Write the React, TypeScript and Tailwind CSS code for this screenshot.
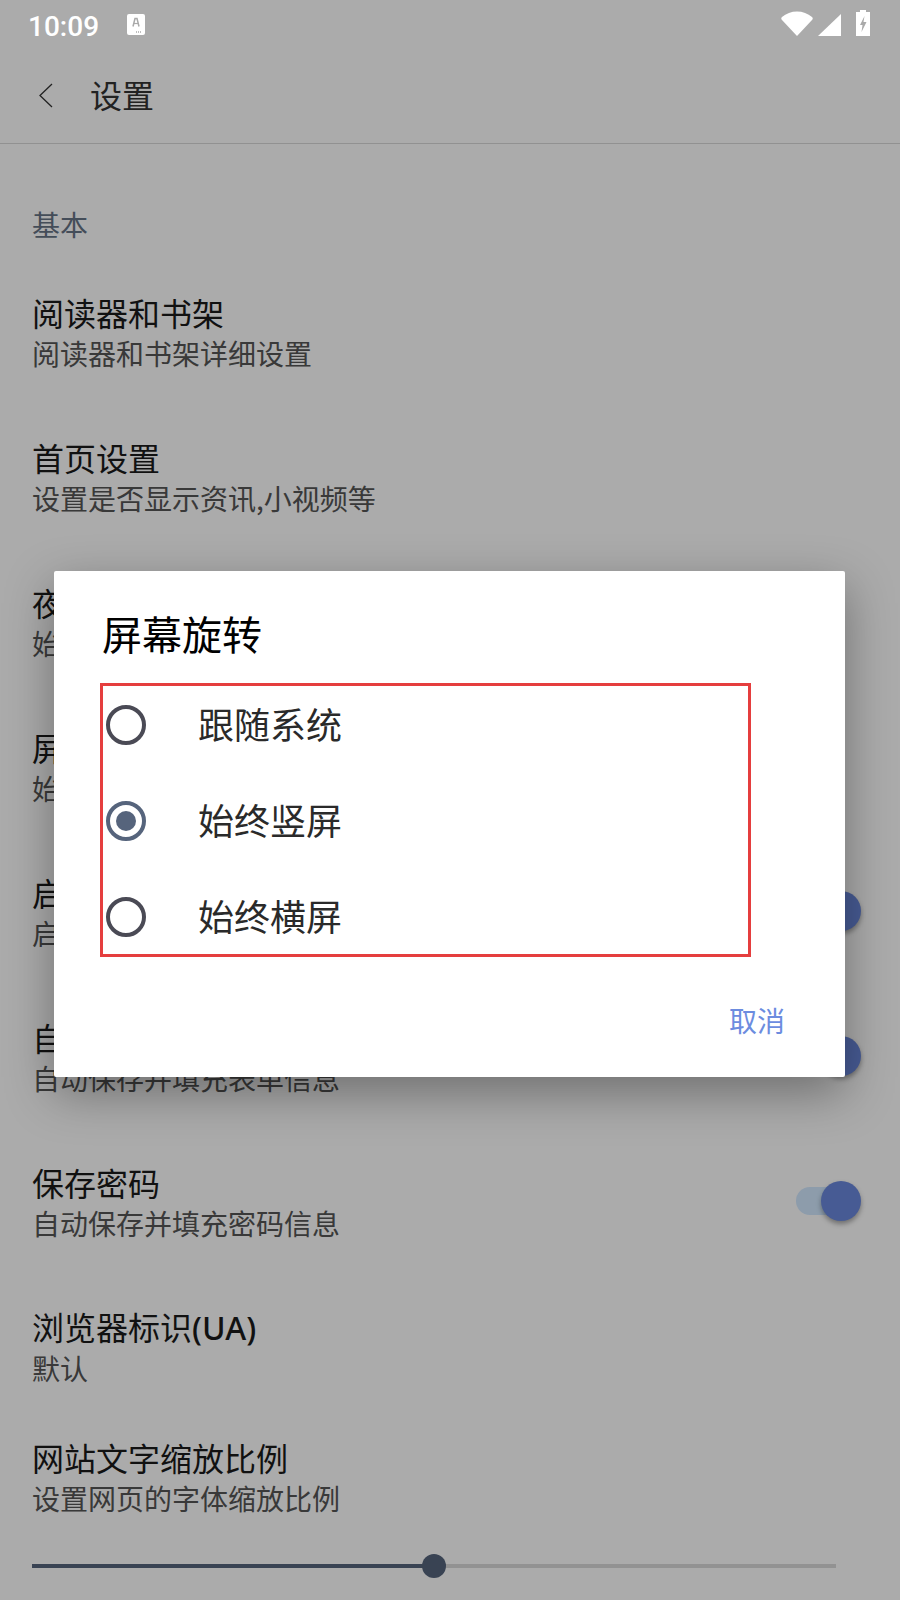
import type { ReactNode } from "react";

const cjk = "font-['Noto_Sans_CJK_SC','Noto_Sans_CJK_JP',sans-serif]";

function Toggle() {
  return (
    <div className="relative -mt-[3px] h-10 w-[65px] shrink-0">
      <div className="absolute left-0 top-[6px] h-7 w-[50px] rounded-full bg-[#d2e9ff]" />
      <div className="absolute right-0 top-0 h-10 w-10 rounded-full bg-[#6a88dd] shadow-[0_3px_5px_rgba(0,0,0,0.35)]" />
    </div>
  );
}

function Item({ title, sub, toggle, h = "h-[145px]" }: { title: ReactNode; sub: string; toggle?: boolean; h?: string }) {
  return (
    <div className={`flex items-center justify-between pl-8 pr-[39px] ${h}`}>
      <div className="flex flex-col">
        <div className="text-[32px] leading-[41px] text-[#1a1a1a]">{title}</div>
        <div className="text-[28px] leading-[41px] text-[#555]">{sub}</div>
      </div>
      {toggle && <Toggle />}
    </div>
  );
}

function Radio({ on }: { on?: boolean }) {
  return on ? (
    <div className="flex h-10 w-10 items-center justify-center rounded-full border-4 border-[#56647c]">
      <div className="h-5 w-5 rounded-full bg-[#56647c]" />
    </div>
  ) : (
    <div className="h-10 w-10 rounded-full border-4 border-[#4a4a55]" />
  );
}

export default function App() {
  return (
    <div className={`relative h-[1600px] w-[900px] overflow-hidden bg-white ${cjk}`}>
      {/* Page */}
      <div className="relative z-0">
        <div className="h-12" />
        <div className="flex h-[96px] items-center border-b border-[#d8d8d8]">
          <svg className="ml-[38px] h-[25px] w-[15px]" viewBox="0 0 15 25" fill="none" stroke="#333" strokeWidth="1.3">
            <path d="M14 1 L2 12.5 L14 24" />
          </svg>
          <div className="-mt-1 ml-[37px] text-[32px] text-[#333]">设置</div>
        </div>
        <div className="pl-8 pt-[60px] text-[28px] leading-[41px] text-[#667385]">基本</div>
        <div className="pt-[15px]">
          <Item title="阅读器和书架" sub="阅读器和书架详细设置" />
          <Item title="首页设置" sub="设置是否显示资讯,小视频等" />
          <Item title="夜间模式" sub="始终关闭夜间模式" />
          <Item title="屏幕旋转" sub="始终竖屏" />
          <Item title="启用广告过滤" sub="启用广告过滤功能" toggle />
          <Item title="自动填充表单" sub="自动保存并填充表单信息" toggle />
          <Item title="保存密码" sub="自动保存并填充密码信息" toggle />
          <Item
            title={
              <>
                浏览器标识<span className="font-['Noto_Sans',sans-serif] font-medium">(UA)</span>
              </>
            }
            sub="默认"
          />
          <Item title="网站文字缩放比例" sub="设置网页的字体缩放比例" h="h-[115px]" />
        </div>
        <div className="relative ml-8 mt-[29px] h-1 w-[804px] bg-[#dadada]">
          <div className="h-1 w-[402px] bg-[#55647c]" />
          <div className="absolute left-[390px] top-[-10px] h-6 w-6 rounded-full bg-[#55647c]" />
        </div>
      </div>

      {/* Scrim */}
      <div className="absolute inset-0 z-10 bg-black/[0.33]" />

      {/* Status bar */}
      <div className="absolute inset-x-0 top-0 z-20 flex h-[46px] items-center pl-[28px] pr-[30px] text-white">
        <span className="mt-[8px] font-['Roboto',sans-serif] text-[28px] font-medium leading-none">10:09</span>
        <svg className="ml-[28px] mt-[2px]" width="18" height="21" viewBox="0 0 18 21">
          <rect width="18" height="21" rx="2" fill="#fff" />
          <path d="M6 12.5 L8 4.5 H10 L12 12.5" fill="none" stroke="#aaa" strokeWidth="1.5" />
          <path d="M6.8 9.5 H11.2" stroke="#aaa" strokeWidth="1.2" />
          <path d="M9 18 h5" stroke="#aaa" strokeWidth="1.4" strokeDasharray="1 1" />
        </svg>
        <div className="mb-[10px] ml-auto flex items-end gap-[5px] self-end">
          <svg width="32" height="25" viewBox="0 0 32 25">
            <path d="M1 9 C0 8 0 7 1 6 C9 -1.5 23 -1.5 31 6 C32 7 32 8 31 9 L16 25 Z" fill="#fff" />
          </svg>
          <svg width="23" height="22" viewBox="0 0 23 22">
            <path d="M23 0 V22 H0 Z" fill="#fff" />
          </svg>
          <svg className="ml-[10px]" width="14" height="26" viewBox="0 0 14 26">
            <path d="M4 0 H10 V2 H14 V26 H0 V2 H4 Z" fill="#fff" />
            <path d="M8.5 6 L4 15 H6.5 L5.5 22 L10.5 12 H7.5 Z" fill="#aaa" />
          </svg>
        </div>
      </div>

      {/* Dialog */}
      <div className="absolute left-[54px] top-[571px] z-30 h-[506px] w-[791px] rounded-[2px] bg-white shadow-[0_16px_48px_rgba(0,0,0,0.35)]">
        <div className="pl-[48px] pt-[34px] text-[40px] leading-[56px] text-black">屏幕旋转</div>
        <div className="ml-[46px] mt-[22px] flex h-[274px] w-[651px] flex-col gap-14 border-[3px] border-[#e53e3e] pt-[19px]">
          {[
            ["跟随系统", false],
            ["始终竖屏", true],
            ["始终横屏", false],
          ].map(([label, on]) => (
            <div key={label as string} className="flex h-10 items-center pl-[3px]">
              <Radio on={on as boolean} />
              <span className="-mt-1 ml-[52px] text-[36px] leading-none text-[#2a2a2a]">{label as string}</span>
            </div>
          ))}
        </div>
        <div className="mt-[43px] flex justify-end pr-[60px] text-[28px] leading-[40px] text-[#6c8cdf]">取消</div>
      </div>
    </div>
  );
}
